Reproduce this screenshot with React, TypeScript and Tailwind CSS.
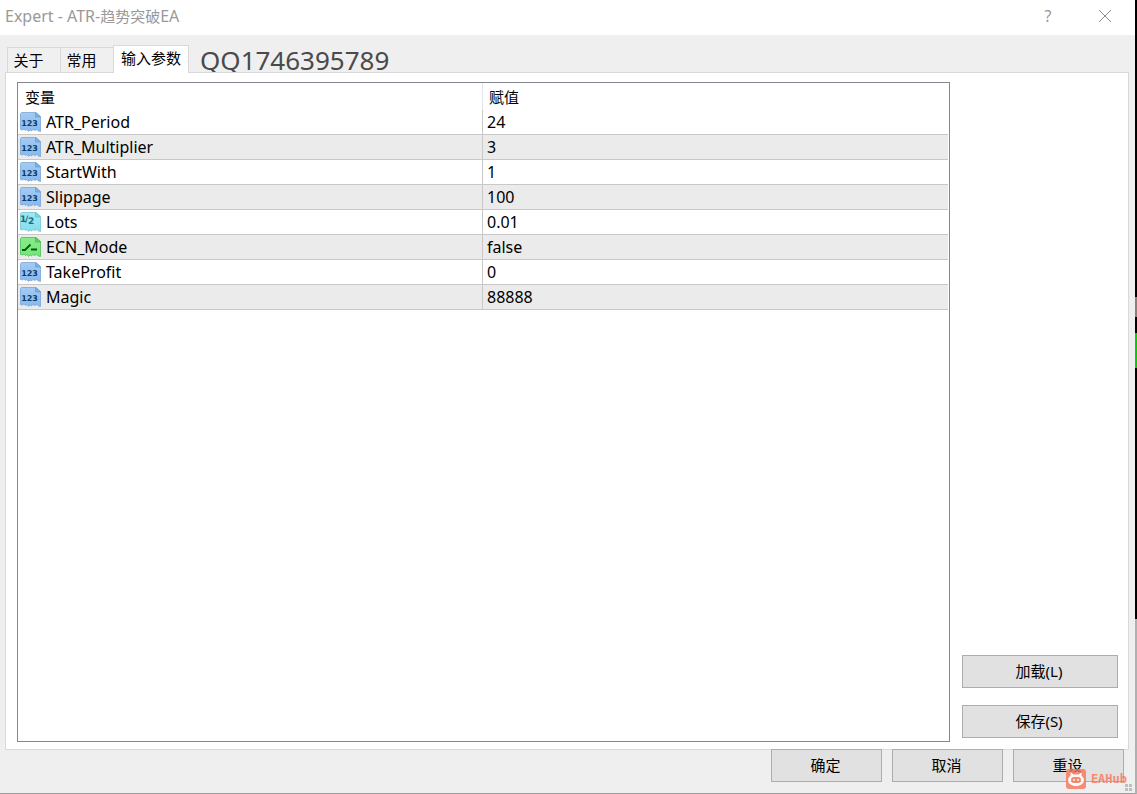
import { useState } from 'react';

type ParamType = 'int' | 'double' | 'bool';

type Param = {
  name: string;
  value: string;
  type: ParamType;
};

const params: Param[] = [
  { name: 'ATR_Period', value: '24', type: 'int' },
  { name: 'ATR_Multiplier', value: '3', type: 'int' },
  { name: 'StartWith', value: '1', type: 'int' },
  { name: 'Slippage', value: '100', type: 'int' },
  { name: 'Lots', value: '0.01', type: 'double' },
  { name: 'ECN_Mode', value: 'false', type: 'bool' },
  { name: 'TakeProfit', value: '0', type: 'int' },
  { name: 'Magic', value: '88888', type: 'int' },
];

const tabs = ['关于', '常用', '输入参数'];

const palette = {
  int: { top: '#a4cbf3', bottom: '#86b9ee', edge: '#6d9fd4', fold: '#7fb0e2', ink: '#0d3a66' },
  double: { top: '#a2e8f2', bottom: '#84dcea', edge: '#62c2d2', fold: '#7fd6e4', ink: '#1b6b7d' },
  bool: { top: '#86ec88', bottom: '#74e67a', edge: '#3fb94b', fold: '#5fd468', ink: '#07590f' },
};

// Torn sheet with a folded corner, one colour per value type
const TypeIcon = ({ type }: { type: ParamType }) => {
  const c = palette[type];
  return (
    <svg width="22" height="22" viewBox="0 0 22 22" className="shrink-0" aria-hidden="true">
      <defs>
        <linearGradient id={`sheet-${type}`} x1="0" y1="0" x2="0" y2="1">
          <stop offset="0" stopColor={c.top} />
          <stop offset="1" stopColor={c.bottom} />
        </linearGradient>
      </defs>
      <path
        d="M2.500 1.500H17L21.500 5.500V20.500L19.500 20L17.500 18.500L16 19.500L14 18.500L12.500 20L11 19L9.500 20.500L8 18.500L6.500 19.500L5 18L3.500 19L1.500 18.500V2.500z"
        fill={`url(#sheet-${type})`}
        stroke={c.edge}
        strokeOpacity="0.7"
      />
      <path d="M16.500 1.500V6H21.500z" fill={c.fold} stroke={c.edge} strokeWidth="0.8" />
      {type === 'int' && (
        <text x="10.500" y="15" textAnchor="middle" fontSize="8" fontWeight="700" fontFamily="DejaVu Sans, sans-serif" textRendering="geometricPrecision" fill={c.ink}>
          123
        </text>
      )}
      {type === 'double' && (
        <text y="11" fontSize="9" fontWeight="700" fontFamily="DejaVu Sans, sans-serif" textRendering="geometricPrecision" fill={c.ink}>
          <tspan x="1">1</tspan>
          <tspan x="6">/</tspan>
          <tspan x="9" y="13">2</tspan>
        </text>
      )}
      {type === 'bool' && (
        <path d="M3 14H6L11.500 8.500M12 13.500H18" fill="none" stroke={c.ink} strokeWidth="1.800" />
      )}
    </svg>
  );
};

const PushButton = ({ label, className }: { label: string; className: string }) => (
  <button className={`h-[33px] border border-[#adadad] bg-[#e1e1e1] pr-0.5 pb-0.5 text-[15px] leading-5 hover:bg-[#e5f1fb] ${className}`}>
    {label}
  </button>
);

const Watermark = () => (
  <div className="pointer-events-none absolute right-2 bottom-[3px] z-20 flex items-center gap-1 opacity-80">
    <svg width="22" height="22" viewBox="0 0 22 22" aria-hidden="true">
      <rect x="1" y="1" width="20" height="20" rx="3" fill="#fa7558" />
      <path d="M5.500 4l3 2.500h5l3-2.500v4c1.500 1 2.500 2.500 2.500 4 0 3.500-3.500 6-8 6s-8-2.500-8-6c0-1.500 1-3 2.500-4z" fill="#fff" />
      <rect x="6" y="9" width="10" height="6" rx="3" fill="#fa7558" />
      <circle cx="9" cy="12" r="1" fill="#fff" />
      <circle cx="13" cy="12" r="1" fill="#fff" />
    </svg>
    <span className="font-['DejaVu_Sans_Mono',monospace] text-[12px] leading-4 font-bold text-[#fa7558]">EAHub</span>
  </div>
);

const App = () => {
  const [activeTab, setActiveTab] = useState(2);

  return (
    <div className="flex min-h-screen bg-[#f0f0f0] font-['Noto_Sans','Noto_Sans_CJK_SC',sans-serif] text-black">
      {/* Dialog */}
      <div className="relative flex min-w-0 flex-1 flex-col border-b border-[#a0a0a0] bg-[#efefef]">
        {/* Title bar */}
        <header className="flex h-[35px] items-center justify-between bg-white pr-[23px] pb-[3px] pl-[5px] text-[#999999]">
          <h1 className="text-[16px] leading-5">
            Expert - ATR-<span className="text-[15px]">趋势突破</span>EA
          </h1>
          <div className="flex items-center gap-[42px]">
            <button aria-label="Help" className="w-4 text-[16px] leading-5">?</button>
            <button aria-label="Close">
              <svg width="14" height="14" viewBox="0 0 14 14">
                <path d="M1 1l12 12M13 1L1 13" stroke="#8a8a8a" fill="none" />
              </svg>
            </button>
          </div>
        </header>

        {/* Tabs */}
        <div className="flex h-[37px] items-end pl-[7px]">
          <div role="tablist" className="flex items-end">
            {tabs.map((tab, i) => (
              <button
                key={tab}
                role="tab"
                aria-selected={activeTab === i}
                onClick={() => setActiveTab(i)}
                className={`border-[#d9d9d9] text-[15px] leading-5 ${activeTab === i
                  ? 'relative z-10 -mb-px h-7 border border-b-0 bg-white px-[7px] pb-1'
                  : 'h-[25px] w-[53px] border-t border-l bg-[#f0f0f0] pr-[11px]'
                  }`}
              >
                {tab}
              </button>
            ))}
          </div>
          <span className="ml-[11px] self-end text-[26px] leading-6 text-[#4a4a4a]">QQ1746395789</span>
        </div>

        {/* Tab page */}
        <main className="mr-1.5 ml-[5px] flex flex-1 gap-3 border border-[#d9d9d9] bg-white pt-[9px] pr-[10px] pb-[7px] pl-[11px]">
          <div className="flex-1 border border-[#828790] bg-white pr-px">
            <table className="w-full table-fixed border-separate border-spacing-0 text-left">
              <thead>
                <tr className="h-[27px] text-[15px] leading-5">
                  <th className="w-1/2 border-r border-[#e5e5e5] p-0 pl-[7px] font-normal">变量</th>
                  <th className="p-0 pl-1.5 font-normal">赋值</th>
                </tr>
              </thead>
              <tbody>
                {params.map((param) => (
                  <tr key={param.name} className="h-[25px] text-[16px] leading-5 even:bg-[#ebebeb]">
                    <td className="border-r border-b border-[#c8c8c8] p-0 pl-px">
                      <div className="flex h-6 items-center gap-[5px]">
                        <TypeIcon type={param.type} />
                        {param.name}
                      </div>
                    </td>
                    <td className="border-b border-[#c8c8c8] p-0 pl-1">{param.value}</td>
                  </tr>
                ))}
              </tbody>
            </table>
          </div>

          <div className="flex w-[156px] flex-col justify-end gap-[17px] pb-1">
            <PushButton label="加载(L)" className="w-full" />
            <PushButton label="保存(S)" className="w-full" />
          </div>
        </main>

        {/* Dialog buttons */}
        <footer className="relative -mt-px flex justify-end gap-[10px] pr-[11px] pb-[11px]">
          <PushButton label="确定" className="w-[111px]" />
          <PushButton label="取消" className="w-[111px]" />
          <PushButton label="重设" className="w-[111px]" />
        </footer>

        {/* Size grip */}
        <div className="absolute right-[3px] bottom-[2px] grid grid-cols-2 gap-px">
          <span className="size-[3px] bg-[#bfbfbf]" />
          <span className="size-[3px] bg-[#bfbfbf]" />
          <span className="size-[3px] bg-[#bfbfbf]" />
          <span className="size-[3px] bg-[#bfbfbf]" />
        </div>
        <Watermark />
      </div>

      {/* Chart window showing past the dialog's edge */}
      <div className="flex w-0.5 flex-col bg-[#b0b0b0]">
        <div className="h-[297px] bg-black" />
        <div className="h-5 bg-[#8a8078]" />
        <div className="h-4 bg-black" />
        <div className="h-[35px] bg-[#00d000]" />
        <div className="h-[251px] bg-black" />
      </div>
    </div>
  );
};

export default App;
